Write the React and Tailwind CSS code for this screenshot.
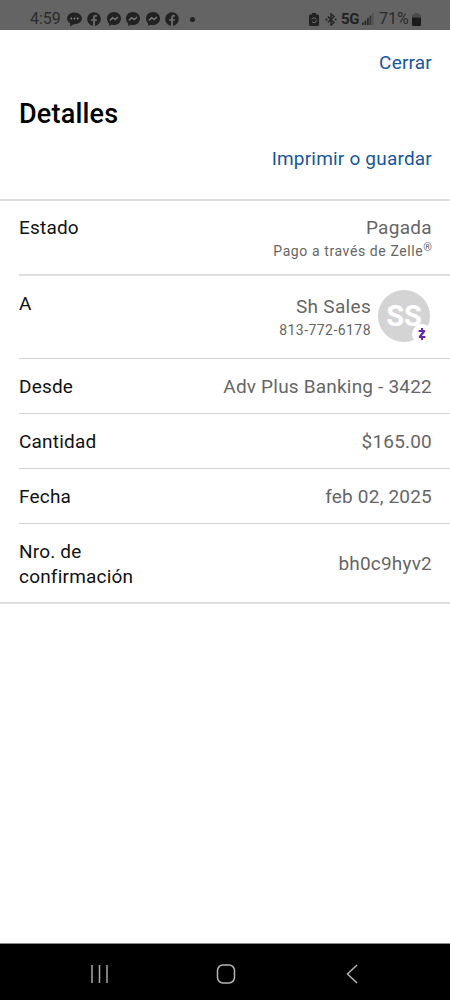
import { FaFacebook } from 'react-icons/fa'

function ChatIcon() {
  return (
    <svg width="15" height="15" viewBox="0 0 15 14" className="text-[#222222]">
      <path d="M7.500 0C3.400 0 0.100 2.600 0.100 6c0 2 1.200 3.700 3.100 4.700L3.200 14l3.400-2.300h0.900c4.100 0 7.400-2.500 7.400-5.700S11.600 0 7.500 0z" fill="currentColor" />
      <g fill="#8a8a8a">
        <circle cx="4.300" cy="6" r="0.900" />
        <circle cx="7.500" cy="6" r="0.900" />
        <circle cx="10.700" cy="6" r="0.900" />
      </g>
    </svg>
  )
}

function MessengerIcon() {
  return (
    <svg width="14" height="14" viewBox="0 0 14 14">
      <path d="M7 0C3.100 0 0 2.800 0 6.600c0 2 0.800 3.700 2.200 4.900V14l2.400-1.200c0.700 0.200 1.500 0.300 2.400 0.300 3.900 0 7-2.700 7-6.500S10.900 0 7 0z" fill="#222222" />
      <path d="M3 8.400l2.700-2.700 2.500 1.800L11 5" fill="none" stroke="#777777" strokeWidth="1.500" />
    </svg>
  )
}

function BatterySaverIcon() {
  return (
    <svg width="10" height="13" viewBox="0 0 10 13">
      <path d="M3 0h4v1.500h1.500A1.500 1.500 0 0 1 10 3v8.500A1.500 1.500 0 0 1 8.500 13h-7A1.500 1.500 0 0 1 0 11.500V3a1.500 1.500 0 0 1 1.500-1.500H3z" fill="#222222" />
      <circle cx="5" cy="7.200" r="2.400" fill="none" stroke="#707070" strokeWidth="1" strokeDasharray="5.500 2" />
    </svg>
  )
}

function BluetoothIcon() {
  return (
    <svg width="12" height="13" viewBox="0 0 12 13">
      <path d="M2.800 3.500l6.200 6-3 2.700V0.800l3 2.700-6.200 6" fill="none" stroke="#222222" strokeWidth="1.300" />
      <circle cx="1.400" cy="6.500" r="1" fill="#222222" />
      <circle cx="10.600" cy="6.500" r="1" fill="#222222" />
    </svg>
  )
}

function SignalIcon() {
  return (
    <svg width="12" height="12" viewBox="0 0 12 12">
      <path d="M0 9.500h1.800V12H0zM2.500 7.500h1.800V12H2.500zM5 5h1.800v7H5z" fill="#2a2a2a" />
      <path d="M7.500 2.500h1.800V12H7.500z" fill="#333333" />
      <path d="M10 0h1.700v12H10z" fill="#525252" />
    </svg>
  )
}

function BatteryIcon() {
  return (
    <svg width="9" height="13" viewBox="0 0 9 13">
      <path d="M2.500 0h4v1.300h1A1.500 1.500 0 0 1 9 2.800V5H0V2.800a1.500 1.500 0 0 1 1.500-1.500h1z" fill="#4c4c4c" />
      <path d="M0 4.500h9v7A1.500 1.500 0 0 1 7.500 13h-6A1.500 1.500 0 0 1 0 11.500z" fill="#1c1c1c" />
    </svg>
  )
}

function StatusBar() {
  return (
    <div className="flex h-[30px] items-center justify-between bg-[#646464] pt-2 pr-[29px] pl-[30px] tracking-normal text-[#2b2b2b]">
      <div className="flex items-center">
        <span className="w-[36.500px] text-base leading-none">4:59</span>
        <div className="flex items-center gap-[5.500px] text-[#222222]">
          <ChatIcon />
          <FaFacebook size={14} />
          <MessengerIcon />
          <MessengerIcon />
          <MessengerIcon />
          <FaFacebook size={14} />
        </div>
        <span className="ml-[11px] size-[5px] rounded-full bg-[#222222]" />
      </div>
      <div className="flex items-center">
        <BatterySaverIcon />
        <span className="ml-[6px]"><BluetoothIcon /></span>
        <span className="ml-[4px] w-[21px] text-[15px] leading-none font-bold tracking-[-0.4px] text-[#222222]">5G</span>
        <SignalIcon />
        <span className="ml-[5px] w-[33px] text-base leading-none">71%</span>
        <BatteryIcon />
      </div>
    </div>
  )
}

function Avatar() {
  return (
    <div className="relative flex size-[52px] items-center justify-center rounded-full bg-[#d4d4d4]">
      <span className="text-[29px] font-bold tracking-[-0.200px] text-white">SS</span>
      <span className="absolute right-[-2px] bottom-[-2px] flex size-[20px] items-center justify-center rounded-full bg-white">
        <svg width="8" height="12" viewBox="0 0 8 12" fill="none" stroke="#6327b0" strokeWidth="2.200">
          <path d="M0.600 3h5.600L1.800 9h5.600" strokeLinejoin="round" />
          <path d="M4 0v3M4 9v3" strokeWidth="2" />
        </svg>
      </span>
    </div>
  )
}

function Row({ label, value }) {
  return (
    <div className="ml-[19px] flex h-[55px] items-center justify-between border-b border-[#d4d4d4] pt-px pr-[18px]">
      <span>{label}</span>
      <span className="text-[#666666]">{value}</span>
    </div>
  )
}

export default function App() {
  return (
    <div className="flex h-[1000px] w-[450px] flex-col bg-white font-['Roboto',sans-serif] text-[19px] leading-6 tracking-[0.200px] text-[#111111]">
      <StatusBar />

      <header className="flex h-[171px] flex-col border-b-2 border-[#dedede] pr-[18px] pl-[19px]">
        <button className="mt-[21px] self-end text-[#17569b]">Cerrar</button>
        <h1 className="mt-[23px] text-[27px] leading-8 font-medium tracking-[0.200px] text-black">Detalles</h1>
        <button className="mt-[17px] self-end text-[#17569b]">Imprimir o guardar</button>
      </header>

      <div className="ml-[19px] flex h-[75px] justify-between border-b-2 border-[#dedede] pt-[15px] pr-[18px]">
        <span>Estado</span>
        <div className="flex flex-col items-end text-[#666666]">
          <span className="tracking-[0.300px]">Pagada</span>
          <span className="text-sm leading-[22px] tracking-[0.600px]">
            Pago a través de Zelle<sup className="text-[11px] tracking-normal">®</sup>
          </span>
        </div>
      </div>

      <div className="ml-[19px] flex h-[83px] justify-between border-b border-[#d4d4d4] pt-[14px] pr-[20px]">
        <span className="pt-[2px]">A</span>
        <div className="flex gap-[7px]">
          <div className="flex flex-col items-end pt-[5px] text-[#666666]">
            <span className="tracking-[0.300px]">Sh Sales</span>
            <span className="text-sm leading-[22px] tracking-[0.450px]">813-772-6178</span>
          </div>
          <Avatar />
        </div>
      </div>

      <Row label="Desde" value="Adv Plus Banking - 3422" />
      <Row label="Cantidad" value="$165.00" />
      <Row label="Fecha" value="feb 02, 2025" />

      <div className="flex h-[80px] items-center justify-between border-b-2 border-[#dedede] pt-[2px] pr-[18px] pl-[19px]">
        <span className="w-[130px] leading-[25px]">Nro. de confirmación</span>
        <span className="text-[#666666]">bh0c9hyv2</span>
      </div>

      <nav className="mt-auto flex h-[57px] items-center justify-between border-t border-[#8a8a8a] bg-black pt-[3px] pr-[92px] pl-[91px]">
        <svg width="17" height="18" viewBox="0 0 17 18" stroke="#a8a8a8" strokeWidth="1.500">
          <path d="M1 0v18M8.500 0v18M16 0v18" />
        </svg>
        <svg className="-ml-[3px]" width="20" height="20" viewBox="0 0 20 20" fill="none" stroke="#b4b4b4" strokeWidth="1.500">
          <rect x="1.500" y="1" width="17" height="18" rx="5.500" />
        </svg>
        <svg width="12" height="20" viewBox="0 0 12 20" fill="none" stroke="#b4b4b4" strokeWidth="1.500">
          <path d="M11 1L1.500 10l9.500 9" />
        </svg>
      </nav>
    </div>
  )
}
